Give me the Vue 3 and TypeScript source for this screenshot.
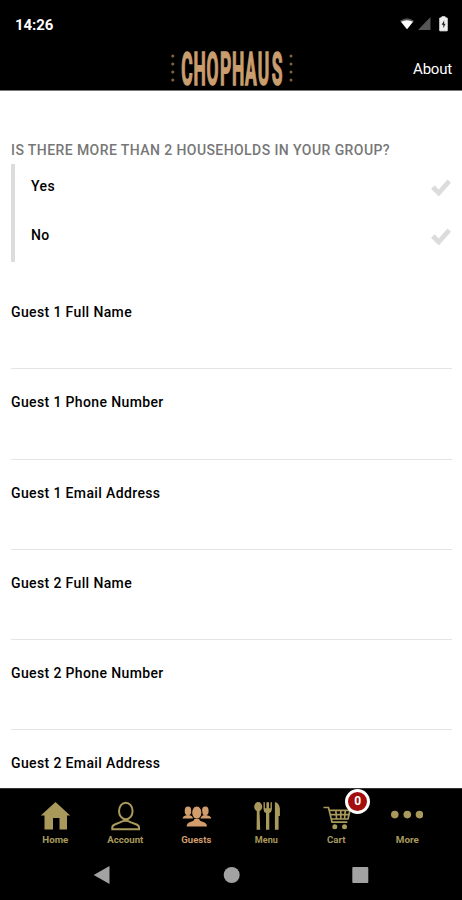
<script setup lang="ts">
import { ref } from 'vue'

type Icon = 'home' | 'account' | 'guests' | 'menu' | 'cart' | 'more'
interface Tab { icon: Icon; label: string; width: number }

const options: string[] = ['Yes', 'No']
const selected = ref<string | null>(null)
const fields: string[] = [1, 2].flatMap((n) =>
  ['Full Name', 'Phone Number', 'Email Address'].map((name) => `Guest ${n} ${name}`),
)
const tabs: Tab[] = [
  { icon: 'home', label: 'Home', width: 26 },
  { icon: 'account', label: 'Account', width: 36 },
  { icon: 'guests', label: 'Guests', width: 30 },
  { icon: 'menu', label: 'Menu', width: 23 },
  { icon: 'cart', label: 'Cart', width: 18.5 },
  { icon: 'more', label: 'More', width: 23 },
]
const active = ref<Icon>('guests')
const cartCount = ref(0)

// Left edges of the wordmark's condensed capitals, before horizontal scaling
const wordmarkScale = 0.37
const letterX = [13.2, 25.6, 38.6, 51.9, 63.9, 77.1, 89.8, 103.7]
  .map((x) => (x / wordmarkScale).toFixed(1))
  .join(' ')
</script>

<template>
  <div class="screen">
    <header class="top">
      <div class="status">
        <span class="clock">14:26</span>
        <svg class="signals" width="50" height="18" viewBox="0 0 50 18">
          <path d="M1 4.7Q8 -.3 15 4.7L8 13.3Z" fill="#555" />
          <path d="M2 5.8Q8 2.7 14 5.8L8 13.3Z" fill="#fff" />
          <path d="M31.5 1V14H19Z" fill="#555" />
          <path d="M40.8 2h2V.8h3.4V2h2v12.8h-7.4Z" fill="#eee" stroke="#eee" stroke-linejoin="round" />
          <path d="M45.3 4.2 42.6 8.8h1.7v3.5l2.3-4.5h-1.6Z" fill="#222" />
        </svg>
      </div>
      <div class="brand">
        <span></span>
        <svg class="logo" width="124" height="40" viewBox="0 0 124 40">
          <g fill="#806040">
            <circle v-for="y in [7, 15, 23, 31]" :key="y" cx="4.8" :cy="y" r="1.6" />
            <circle v-for="y in [7, 15, 23, 31]" :key="-y" cx="123" :cy="y" r="1.5" />
          </g>
          <text class="wordmark" :transform="`translate(0 36.4) scale(${wordmarkScale} 1)`" :x="letterX">CHOPHAUS</text>
        </svg>
        <a class="about">About</a>
      </div>
    </header>

    <main class="form">
      <h1>IS THERE MORE THAN 2 HOUSEHOLDS IN YOUR GROUP?</h1>
      <div class="options">
        <div v-for="option in options" :key="option" class="option" @click="selected = option">
          <span>{{ option }}</span>
          <svg :class="{ chosen: selected === option }" width="20" height="18" viewBox="0 0 20 18">
            <path d="M0 9.7 3.7 6.3 7.7 10.5 16.5.5 20 3.7 7.8 17.6Z" />
          </svg>
        </div>
      </div>
      <div v-for="field in fields" :key="field" class="field">{{ field }}</div>
    </main>

    <footer class="bottom">
      <nav class="tabs">
        <div v-for="tab in tabs" :key="tab.icon" class="tab" :class="{ active: active === tab.icon }" @click="active = tab.icon">
          <svg class="icon" width="32" height="30" viewBox="0 0 32 30">
            <path v-if="tab.icon === 'home'" d="M16.5 1 31.2 14.5H28V28.5H20.5V17H14V28.5H5.5V14.5H1.8Z" fill="currentColor" />
            <g v-else-if="tab.icon === 'account'" fill="none" stroke="currentColor" stroke-width="2">
              <ellipse cx="16.8" cy="10" rx="6.8" ry="8.3" />
              <path d="M3.3 28.2V26.5Q3.3 24.4 6.3 23.3L11 21.4Q16.6 18.2 22 21.4L27 23.3Q30 24.4 30 26.5V28.2Z" />
            </g>
            <g v-else-if="tab.icon === 'guests'" fill="currentColor">
              <ellipse cx="8" cy="10" rx="3.3" ry="4.4" /><ellipse cx="25.3" cy="10" rx="3.3" ry="4.4" />
              <path d="M2.6 17.6Q2.8 14.8 7.5 14Q13 14.4 13 17.6ZM20.5 17.6Q20.5 14.4 25.5 14Q31 14.8 31.3 17.6Z" />
              <ellipse cx="16.8" cy="11.6" rx="5.1" ry="6.6" stroke="#000" />
              <path d="M6.6 25.6Q6.6 21.7 11 20.7Q14.2 20.1 14.3 18H19.3Q19.4 20.1 22.6 20.7Q27 21.7 27 25.6Z" />
            </g>
            <g v-else-if="tab.icon === 'menu'" fill="currentColor">
              <ellipse cx="8.2" cy="5.7" rx="4" ry="4.7" /><path d="M6.8 9h2.7l.7 19.8H6.6ZM25.9 1.3Q29.6 3 29.9 8V15H28.6V28.8H24.9V1.3Z" />
              <path d="M13.5 1.3h1.4v6h1.5v-6h2.6v6h1.5v-6h1.4V8Q21.9 11 19.3 12V28.8H16V12Q13.5 11 13.5 8Z" />
            </g>
            <g v-else-if="tab.icon === 'cart'" fill="none" stroke="currentColor" stroke-width="1.7">
              <path d="M3.5 6.5H8.5L12 21.2H27.3M9.3 9.3H30L28 18H11.3M10.3 13.7H28.6M15.8 9.3 16.6 18M20.8 9.3V18M25.3 9.3 24.5 18" />
              <g fill="currentColor" stroke="none"><circle cx="14.8" cy="25.8" r="2.5" /><circle cx="24.5" cy="25.8" r="2.5" /></g>
            </g>
            <g v-else fill="currentColor"><circle cx="3.8" cy="13.6" r="3.8" /><circle cx="16.3" cy="13.6" r="3.8" /><circle cx="28.5" cy="13.6" r="3.8" /></g>
          </svg>
          <svg class="caption" width="40" height="12" viewBox="0 0 40 12">
            <text x="20.3" y="9.2" text-anchor="middle" :textLength="tab.width" lengthAdjust="spacingAndGlyphs">{{ tab.label }}</text>
          </svg>
          <span v-if="tab.icon === 'cart'" class="badge">{{ cartCount }}</span>
        </div>
      </nav>
      <svg class="system" width="462" height="24" viewBox="0 0 462 24">
        <g fill="#a2a2a2"><path d="M93.7 12 109.5 3V21Z" /><circle cx="231.7" cy="12" r="8" /><rect x="352.3" y="4" width="16" height="16" rx="1" /></g>
      </svg>
    </footer>
  </div>
</template>

<style>
body { margin: 0; background: #fff; }
</style>

<style scoped>
.screen { width: 462px; height: 900px; display: flex; flex-direction: column; overflow: hidden; background: #fff; color: #000; font-family: Roboto, sans-serif; }
.top { height: 91px; flex: none; box-sizing: border-box; background: #000; color: #fff; border-bottom: 1px solid #777; }
.status { height: 49px; display: flex; justify-content: space-between; align-items: center; box-sizing: border-box; padding: 1px 13px 0 15px; }
.clock { font-size: 15px; font-weight: 700; letter-spacing: -.1px; }
.brand { height: 40px; display: grid; grid-template-columns: 168px 124px 1fr; align-items: center; }
.logo { display: block; overflow: visible; }
.wordmark { font-family: Roboto, sans-serif; font-size: 47px; font-weight: 700; fill: #c99d6e; stroke: #c99d6e; stroke-width: 1.6px; }
.about { justify-self: end; margin-right: 10px; font-size: 15px; letter-spacing: -.2px; }
.form { flex: 1; min-height: 0; overflow: hidden; padding: 49.2px 10px 0 11px; }
h1 { margin: 0; height: 23.8px; line-height: 21px; font-size: 14px; font-weight: 500; letter-spacing: .42px; color: #777; white-space: nowrap; }
.options { height: 98px; box-sizing: border-box; border-left: 4px solid #dcdcdc; margin-bottom: 17px; }
.option { height: 49px; display: flex; justify-content: space-between; align-items: flex-start; padding-left: 16px; font-size: 14px; font-weight: 500; letter-spacing: .4px; line-height: 20px; box-sizing: border-box; padding-top: 12px; }
.option svg { margin-top: 3px; margin-right: 1px; fill: #dcdcdc; }
.option svg.chosen { fill: #111; }
.field { height: 90.3px; box-sizing: border-box; border-bottom: 1.5px solid #e4e4e4; padding-top: 23px; line-height: 20px; font-size: 14px; font-weight: 500; letter-spacing: .37px; }
.bottom { height: 112px; flex: none; box-sizing: border-box; background: #000; border-top: 1px solid #333; }
.tabs { height: 74px; display: flex; padding: 0 20px; }
.tab { position: relative; flex: 1; display: flex; flex-direction: column; align-items: center; padding-top: 12px; color: #a99a5c; }
.tab.active { color: #d29d6c; }
.icon, .caption { display: block; flex: none; }
.caption { margin-top: 3px; }
.caption text { font-size: 9.5px; font-weight: 700; fill: currentColor; }
.badge { position: absolute; top: 0; left: 44px; width: 25px; height: 25px; box-sizing: border-box; border: 3px solid #fff; border-radius: 50%; background: #a40d0d; color: #fff; font-size: 12px; font-weight: 700; line-height: 19px; text-align: center; }
.system { display: block; }
</style>
